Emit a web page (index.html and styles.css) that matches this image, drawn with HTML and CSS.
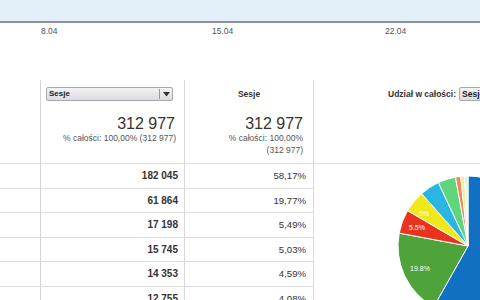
FILE: index.html
```html
<!DOCTYPE html>
<html lang="pl">
<head>
<meta charset="utf-8">
<link rel="stylesheet" href="styles.css">
</head>
<body>
<div class="band"></div>
<div class="axis">
  <span class="tick t1">8.04</span>
  <span class="tick t2">15.04</span>
  <span class="tick t3">22.04</span>
</div>
<div class="report">
  <div class="grid">
    <div class="cell c0 head"></div>
    <div class="cell c1 head">
      <div class="select">
        <span class="select-label">Sesje</span>
        <span class="select-btn"><svg width="7" height="5" viewBox="0 0 7 5"><path d="M0 0H7L3.5 4.5Z" fill="#333"/></svg></span>
      </div>
      <div class="total">312 977</div>
      <div class="sub">% całości: 100,00% <span class="nowrap">(312 977)</span></div>
    </div>
    <div class="cell c2 head">
      <div class="colname">Sesje</div>
      <div class="total">312 977</div>
      <div class="sub">% całości: 100,00% <span class="nowrap block">(312 977)</span></div>
    </div>

    <div class="cell c0"></div><div class="cell c1 num">182 045</div><div class="cell c2 pct">58,17%</div>
    <div class="cell c0"></div><div class="cell c1 num">61 864</div><div class="cell c2 pct">19,77%</div>
    <div class="cell c0"></div><div class="cell c1 num">17 198</div><div class="cell c2 pct">5,49%</div>
    <div class="cell c0"></div><div class="cell c1 num">15 745</div><div class="cell c2 pct">5,03%</div>
    <div class="cell c0"></div><div class="cell c1 num">14 353</div><div class="cell c2 pct">4,59%</div>
    <div class="cell c0"></div><div class="cell c1 num">12 755</div><div class="cell c2 pct">4,08%</div>
  </div>
  <div class="side">
    <div class="side-head">
      <span class="share">Udział w całości:</span>
      <span class="mini-select">Sesje</span>
    </div>
    <div class="pie">
      <svg width="166" height="136" viewBox="0 0 166 136">
        <g stroke="#fff" stroke-width="1" stroke-linejoin="round">
          <path d="M154 82L154 12A70 70 0 1 1 119.62 142.98Z" fill="#1270c2"/>
          <path d="M154 82L119.62 142.98A70 70 0 0 1 85.19 69.15Z" fill="#4fa33b"/>
          <path d="M154 82L85.19 69.15A70 70 0 0 1 93.59 46.63Z" fill="#e8341f"/>
          <path d="M154 82L93.59 46.63A70 70 0 0 1 107.58 29.61Z" fill="#f1e81c"/>
          <path d="M154 82L107.58 29.61A70 70 0 0 1 124.39 18.57Z" fill="#2ab6e3"/>
          <path d="M154 82L124.39 18.57A70 70 0 0 1 141.45 13.13Z" fill="#5fd67b"/>
          <path d="M154 82L141.45 13.13A70 70 0 0 1 146.68 12.38Z" fill="#ec8a55"/>
          <path d="M154 82L146.68 12.38A70 70 0 0 1 150.7 12.08Z" fill="#fbe7a0"/>
          <path d="M154 82L150.7 12.08A70 70 0 0 1 154 12Z" fill="#d8f3ea"/>
        </g>
        <g class="pie-label" fill="#fff">
          <text x="106" y="106.5" text-anchor="middle">19.8%</text>
          <text x="103" y="65.5" text-anchor="middle">5.5%</text>
          <text x="110" y="51.5" text-anchor="middle">5%</text>
        </g>
      </svg>
    </div>
  </div>
</div>
</body>
</html>
```

FILE: styles.css
```css
html, body {
  margin: 0;
  padding: 0;
  overflow: hidden;
  background: #fff;
}
body {
  width: 480px;
  height: 300px;
  font-family: "Liberation Sans", Arial, sans-serif;
  color: #333;
}
* { box-sizing: border-box; }

.band {
  height: 23px;
  background: #e3eff9;
  border-bottom: 2px solid #8d9198;
}
.axis {
  position: relative;
  height: 57px;
}
.tick {
  position: absolute;
  top: 3px;
  font-size: 8.5px;
  line-height: 10px;
  color: #555;
}
.t1 { left: 41px; }
.t2 { left: 212px; }
.t3 { left: 385px; }

.report {
  display: flex;
}
.grid {
  display: grid;
  grid-template-columns: 41px 144px 129px;
  grid-template-rows: 84px;
  grid-auto-rows: 24.6px;
  width: 314px;
  flex: none;
}
.cell {
  border-right: 1px solid #d9d9d9;
  border-bottom: 1px solid #dcdcdc;
}
.c0 { border-right-color: #d4d4d4; }
.head {
  height: 84px;
}

.c1.head {
  padding: 7px 8px 0 6px;
  text-align: right;
}
.c2.head {
  padding: 7px 10px 0 8px;
  text-align: right;
}
.select {
  display: flex;
  height: 14px;
  border: 1px solid #a9a9a9;
  border-radius: 2px;
  background: linear-gradient(#f3f3f5, #dcdce0);
  text-align: left;
  width: 127px;
  margin-left: -1px;
}
.select-label {
  flex: 1;
  font-size: 8px;
  font-weight: bold;
  line-height: 12px;
  padding-left: 2px;
  color: #222;
}
.select-btn {
  width: 13px;
  border-left: 1px solid #999;
  display: flex;
  align-items: center;
  justify-content: center;
  margin: 1px 0;
}
.colname {
  height: 14px;
  line-height: 14px;
  text-align: center;
  font-size: 8.5px;
  font-weight: bold;
  color: #333;
  padding-left: 2px;
}
.total {
  margin-top: 15px;
  font-size: 16px;
  line-height: 16px;
  color: #333;
}
.c1 .total { padding-right: 1px; }
.sub {
  font-size: 8.5px;
  line-height: 12px;
  color: #555;
}
.nowrap { white-space: nowrap; }
.block { display: block; }

.num {
  font-size: 10px;
  font-weight: bold;
  text-align: right;
  padding-right: 6px;
  line-height: 24px;
  color: #333;
}
.pct {
  font-size: 9.6px;
  text-align: right;
  padding-right: 7px;
  line-height: 24px;
  color: #333;
}

.side {
  flex: 1;
  min-width: 0;
  overflow: hidden;
}
.side-head {
  height: 84px;
  border-bottom: 1px solid #dcdcdc;
  padding: 7px 0 0 74px;
  display: flex;
  align-items: flex-start;
  white-space: nowrap;
}
.share {
  font-size: 8.5px;
  font-weight: bold;
  line-height: 14px;
  color: #333;
}
.mini-select {
  margin-left: 3px;
  height: 14px;
  width: 80px;
  flex: none;
  border: 1px solid #a9a9a9;
  border-radius: 2px;
  background: linear-gradient(#f3f3f5, #dcdce0);
  font-size: 8.5px;
  font-weight: bold;
  line-height: 12px;
  padding-left: 2px;
  color: #222;
}
.pie svg { display: block; }
.pie-label {
  font-family: "Liberation Sans", Arial, sans-serif;
  font-size: 7px;
}
```
